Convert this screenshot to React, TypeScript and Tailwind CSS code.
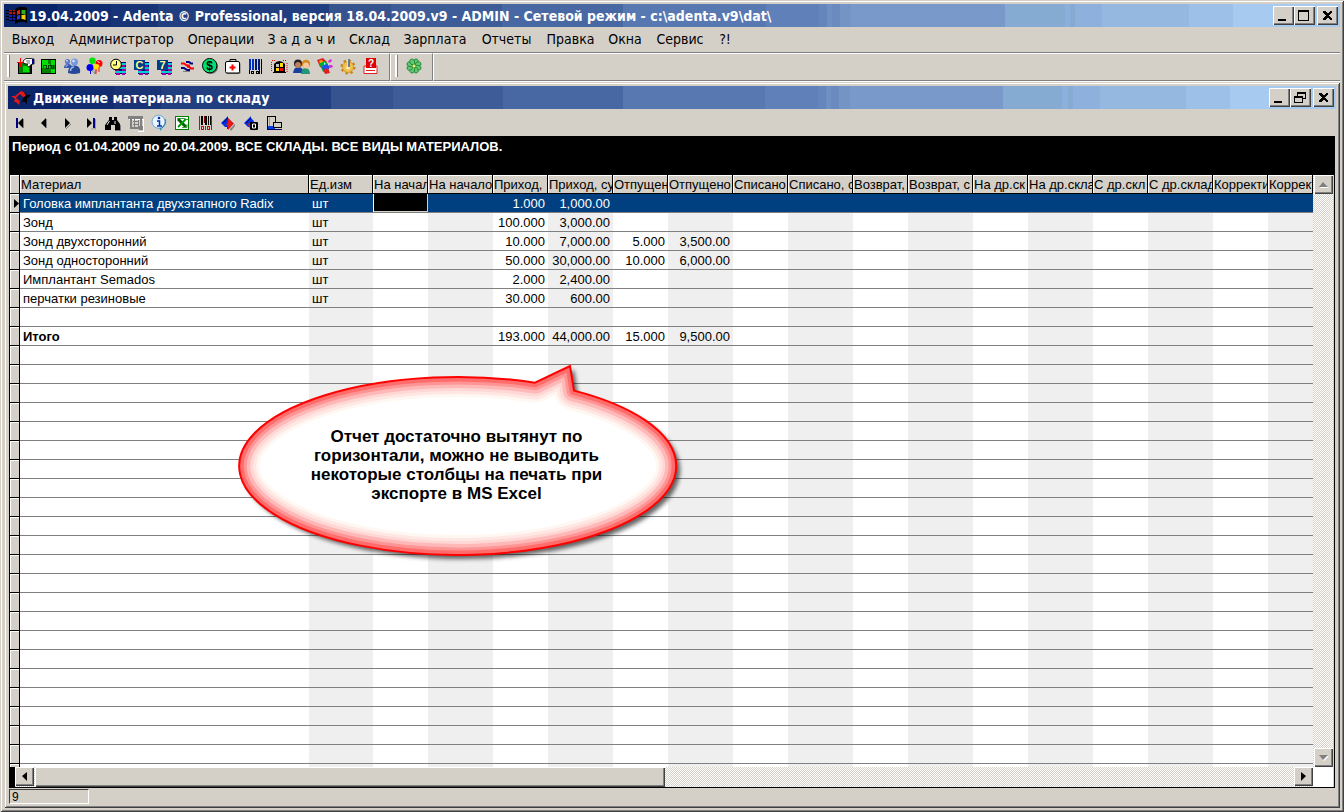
import type { ReactNode } from "react";
import clsx from "clsx";

/* ---------- shared bevels ---------- */

const RAISED =
  "bg-[#d4d0c8] shadow-[inset_1px_1px_0_#fff,inset_-1px_-1px_0_#404040,inset_-2px_-2px_0_#808080]";
const FRAME =
  "bg-[#d4d0c8] shadow-[inset_1px_1px_0_#d4d0c8,inset_-1px_-1px_0_#404040,inset_2px_2px_0_#fff,inset_-2px_-2px_0_#808080]";
const DITHER = "bg-[repeating-conic-gradient(#d4d0c8_0_25%,#fff_0_50%)] bg-[length:2px_2px]";
const CAPTION =
  "bg-[linear-gradient(90deg,#0a246a_0_4%,#112c70_0_8%,#183476_0_11.5%,#213f80_0_24.3%,#365390_0_29%,#3d5c98_0_37.3%,#4868a3_0_46.3%,#5878b1_0_57%,#5f80b9_0_61%,#6586bd_0_61.6%,#6f90c3_0_62%,#6a8bc0_0_62.6%,#7494c6_0_63.4%,#7899c9_0_74.9%,#86abd3_0_79.4%,#8bb0db_0_79.8%,#86abd3_0_80.2%,#8db1dc_0_82.2%,#95b8e1_0_88.7%,#9dc0e9_0_92%,#a6caf0_0)]";

/* ---------- icons ---------- */

function Icon({ children }: { children: ReactNode }) {
  return (
    <svg width="16" height="16" viewBox="0 0 16 16" className="block shrink-0 overflow-visible" aria-hidden="true">
      {children}
    </svg>
  );
}

function Stripes() {
  return (
    <g shapeRendering="crispEdges">
      <rect x="5" y="4" width="11" height="12" fill="#000080" />
      <path d="M9 5.500h7M9 9.500h7M5 13.500h11" stroke="#00d0d0" strokeWidth="2" />
      <path d="M12 7.500h3M12 11.500h4M5 11.500h4M6 15.500h4M12 15.500h3" stroke="#a000a0" strokeWidth="2" />
    </g>
  );
}

function LetterTile({ letter }: { letter: string }) {
  return (
    <Icon>
      <Stripes />
      <rect x="1" y="2" width="11" height="10" fill="#003c8c" shapeRendering="crispEdges" />
      <text x="6.5" y="11" textAnchor="middle" fontSize="11" fontWeight="bold" fontFamily="Liberation Sans, sans-serif" fill="#ffff80">
        {letter}
      </text>
    </Icon>
  );
}

const mainTools: { label: string; icon: ReactNode }[] = [
  {
    label: "Выход",
    icon: (
      <Icon>
        <g shapeRendering="crispEdges">
          <rect x="0" y="4" width="14" height="12" fill="#000" />
          <rect x="1" y="5" width="11" height="10" fill="#008000" />
          <rect x="5" y="8" width="6" height="6" fill="#00e000" />
          <path d="M2.500 0v9M-1 4.500h8" stroke="#f00" />
        </g>
        <path d="M5 3L8 0.500H13L16 1V6L13 6.500L11 9L9 8L9.500 6L6 5.500Z" fill="#fff" stroke="#000" strokeWidth="0.800" />
        <path d="M8 3h4M9 5h3" stroke="#000" strokeWidth="0.600" />
        <rect x="14" y="1" width="2" height="5" fill="#000080" />
      </Icon>
    ),
  },
  {
    label: "Пульс",
    icon: (
      <Icon>
        <g shapeRendering="crispEdges">
          <rect x="0" y="1" width="15" height="15" fill="#000" />
          <rect x="1" y="2" width="13" height="13" fill="#008000" />
          <path d="M1 2h6v4h2v4H1zM10 2h4v5h-4zM10 11h4v4h-4z" fill="#00e000" />
          <path d="M2.500 10V7.500h3V10h2V7.500h3V10h2V7" fill="none" stroke="#004000" />
        </g>
      </Icon>
    ),
  },
  {
    label: "Пациенты",
    icon: (
      <Icon>
        <circle cx="3.500" cy="3.500" r="2.600" fill="#5878c8" />
        <path d="M0 10Q0 6 4 6T8 10Z" fill="#3858b0" />
        <circle cx="10.500" cy="4" r="3.500" fill="#7898e0" />
        <path d="M4 15Q4 7.500 10.500 7.500T16 15Q10 17 4 15Z" fill="#284898" />
        <circle cx="9.500" cy="3" r="1.200" fill="#dce8ff" />
        <path d="M6.500 13Q6.500 9.500 10 9" fill="none" stroke="#a0bcf4" strokeWidth="1.500" />
        <circle cx="3" cy="2.800" r="0.900" fill="#dce8ff" />
        <path d="M2 9Q2 7 4 7" fill="none" stroke="#a0bcf4" />
      </Icon>
    ),
  },
  {
    label: "События",
    icon: (
      <Icon>
        <path d="M5 5L8 16M11 8L8 16M3 11L8 16" stroke="#808080" strokeWidth="0.700" />
        <circle cx="5.500" cy="2.800" r="3.200" fill="#00e000" />
        <circle cx="12" cy="5.500" r="3.500" fill="#f00" />
        <circle cx="3" cy="9.500" r="3.500" fill="#0000f0" />
        <circle cx="9.500" cy="9" r="2.900" fill="#ffe000" />
        <path d="M12 9v5M9 11v5" stroke="#f00" strokeWidth="0.900" />
        <path d="M3.500 13v3" stroke="#0000f0" />
        <path d="M10.500 3.500l2 1" stroke="#fff" />
      </Icon>
    ),
  },
  {
    label: "Время",
    icon: (
      <Icon>
        <Stripes />
        <circle cx="6" cy="6.500" r="5.300" fill="#ffff80" stroke="#000" />
        <path d="M6.500 3v4H3" fill="none" stroke="#000" />
      </Icon>
    ),
  },
  { label: "Календарь", icon: <LetterTile letter="C" /> },
  { label: "Неделя", icon: <LetterTile letter="7" /> },
  {
    label: "Движение",
    icon: (
      <Icon>
        <path d="M2 5.500h3l3 2h3" fill="none" stroke="#f00" strokeWidth="2" />
        <path d="M7 4h3l2 1.500h2" fill="none" stroke="#000080" strokeWidth="2" />
        <path d="M2 10h3l3 2h3" fill="none" stroke="#000080" strokeWidth="2" />
        <path d="M8 8.800h2l2 1.700h3" fill="none" stroke="#f00" strokeWidth="2" />
        <path d="M4 13.500h7" fill="none" stroke="#808080" />
      </Icon>
    ),
  },
  {
    label: "Касса",
    icon: (
      <Icon>
        <circle cx="8.800" cy="8.800" r="7.300" fill="#707070" />
        <circle cx="7.700" cy="7.700" r="7.200" fill="#00e070" stroke="#000" />
        <text x="7.700" y="12" textAnchor="middle" fontSize="12" fontWeight="bold" fontFamily="Liberation Sans, sans-serif">
          $
        </text>
      </Icon>
    ),
  },
  {
    label: "Лечение",
    icon: (
      <Icon>
        <path d="M5 4V1.500h6V4" fill="none" stroke="#000" />
        <rect x="1.500" y="4.500" width="14" height="11.500" rx="1.500" fill="#707070" />
        <rect x="0.500" y="3.500" width="14" height="11.500" rx="1.500" fill="#fff" stroke="#000" />
        <path d="M7.500 6.500v6M4.500 9.500h6" stroke="#f00" strokeWidth="2" />
      </Icon>
    ),
  },
  {
    label: "Штрих-код",
    icon: (
      <Icon>
        <g shapeRendering="crispEdges">
          <path d="M2 1v11M5 1v11" stroke="#0030c0" strokeWidth="2" />
          <path d="M8 1v11M11 1v11" stroke="#001878" strokeWidth="2" />
          <path d="M13.500 1v15M1.500 12v4" stroke="#000" />
          <path d="M3.500 13.500h2v2h-2zM8.500 13.500h2v2h-2zM11.500 12v4" fill="none" stroke="#000" />
        </g>
      </Icon>
    ),
  },
  {
    label: "Окно",
    icon: (
      <Icon>
        <path d="M3 15V6Q8 0 14 6V15Z" fill="#000" />
        <path d="M5 6h3v3H5z" fill="#c0c0c0" />
        <path d="M9 5h3v4H9zM5 10h3v3H5z" fill="#ffe000" />
        <path d="M9 10h3v3H9z" fill="#f00" />
        <path d="M1 2.500h4M12 2.500h4M0.500 4v10M16 5v10" stroke="#e00000" strokeDasharray="1 1" />
        <path d="M2 14.500h13" stroke="#000" />
      </Icon>
    ),
  },
  {
    label: "Сотрудники",
    icon: (
      <Icon>
        <path d="M-1 15Q0 8 5 9T9 15Z" fill="#1840a0" />
        <circle cx="4" cy="5.500" r="4" fill="#282020" />
        <circle cx="4" cy="7" r="2.900" fill="#c08060" />
        <path d="M7 16Q8 9 12 10T16 16Z" fill="#209878" />
        <circle cx="12" cy="6" r="4.200" fill="#d88818" />
        <circle cx="12" cy="7.500" r="3" fill="#f4c8a0" />
      </Icon>
    ),
  },
  {
    label: "Задачи",
    icon: (
      <Icon>
        <path d="M0 2l6-2 4 4-1 8-6-3z" fill="#e02020" />
        <path d="M2 5l6-2 3 3v5l-5 3z" fill="#00b030" />
        <path d="M5 8l5-2 3 3-3 5-4-2z" fill="#2050f0" />
        <path d="M2 3l3-1 1 2-3 1z" fill="#ffb000" />
        <path d="M6 12l5-2 2 5-5 1z" fill="#e02020" />
        <path d="M11 3l3-2 1 2-3 2zM12 7l3 0 1 2-3 1z" fill="#e020e0" />
        <path d="M7 4l2 2-2 1z" fill="#80ffff" />
      </Icon>
    ),
  },
  {
    label: "Настройка",
    icon: (
      <Icon>
        <circle cx="8" cy="9" r="6.300" fill="none" stroke="#c88818" strokeWidth="2.500" strokeDasharray="2.400 2.500" />
        <circle cx="8" cy="9" r="5.500" fill="#f0c050" stroke="#c08010" strokeWidth="0.600" />
        <circle cx="8" cy="9.500" r="2" fill="#fff0b0" />
        <path d="M7 1h3v8H7z" fill="#687898" />
        <path d="M7.500 1v8" stroke="#d8e0f0" />
      </Icon>
    ),
  },
  {
    label: "Справка",
    icon: (
      <Icon>
        <path d="M1 8h13v7.500H1z" fill="#fff" stroke="#e02020" />
        <path d="M3 12.500h9" stroke="#e02020" />
        <rect x="3" y="0" width="10" height="10" fill="#e00000" />
        <text x="8" y="9" textAnchor="middle" fontSize="10" fontWeight="bold" fontFamily="Liberation Sans, sans-serif" fill="#fff">
          ?
        </text>
      </Icon>
    ),
  },
];

const petals = [0, 45, 90, 135, 180, 225, 270, 315];

function CloverIcon() {
  return (
    <Icon>
      {petals.map((a) => (
        <ellipse key={a} cx="8" cy="3.500" rx="2.300" ry="3" fill="#60c870" stroke="#187828" strokeWidth="0.700" transform={`rotate(${a + 22} 8 8)`} />
      ))}
      <circle cx="8" cy="8" r="1.500" fill="#e8f070" />
    </Icon>
  );
}

function Arrows() {
  return (
    <>
      <path d="M10 14l5-5v2l-4 5z" fill="#808080" />
      <path d="M1 8l7-7v2l3 3-2 8H7v-2H5z" fill="#0030e0" />
      <path d="M3 8l5-5" stroke="#000060" />
    </>
  );
}

const childTools: { label: string; icon: ReactNode; disabled?: boolean }[] = [
  {
    label: "Первая запись",
    icon: (
      <Icon>
        <path d="M10.500 4v9" stroke="#808080" />
        <path d="M5 8l5-5v10z" fill="#000" />
        <path d="M4 3v10" stroke="#000080" strokeWidth="2" />
      </Icon>
    ),
  },
  { label: "Предыдущая запись", icon: <Icon><path d="M10.500 4v9" stroke="#808080" /><path d="M5 8l5-5v10z" /></Icon> },
  { label: "Следующая запись", icon: <Icon><path d="M7 14l5-5" stroke="#808080" /><path d="M11 8L6 3v10z" /></Icon> },
  {
    label: "Последняя запись",
    icon: (
      <Icon>
        <path d="M13.500 4v10H9" fill="none" stroke="#808080" strokeWidth="0.700" />
        <path d="M10 8L5 3v10z" fill="#000" />
        <path d="M12 3v10" stroke="#000080" strokeWidth="2" />
      </Icon>
    ),
  },
  {
    label: "Поиск",
    icon: (
      <Icon>
        <path d="M4 2h3v3h2V2h3v3l3 4v6h-5v-5H6v5H0v-5l4-5z" fill="#000" />
        <path d="M4.500 6L2 10M10 6v3" stroke="#fff" strokeWidth="0.900" />
        <path d="M15.500 10v5.500H10" fill="none" stroke="#808080" />
      </Icon>
    ),
  },
  {
    label: "Отбор",
    disabled: true,
    icon: (
      <Icon>
        <g shapeRendering="crispEdges">
          <path d="M1 4.500h15M15.500 4v12H10" fill="none" stroke="#fff" />
          <path d="M0 1h15v3H0zM2 4h2v10H2zM12 4h2v8h-2zM5 6h6v1H5zM5 9h6v1H5zM4 12h6v2H4zM11 11h4v4h-4z" fill="#808080" />
          <path d="M6.500 4v9M10.500 5v9" fill="none" stroke="#808080" />
        </g>
      </Icon>
    ),
  },
  {
    label: "Информация",
    icon: (
      <Icon>
        <circle cx="8.500" cy="7.500" r="7" fill="#b8c8d8" />
        <path d="M8 13l2 3 1-4z" fill="#3088a0" />
        <circle cx="7.500" cy="6.700" r="6.500" fill="#e8f4ff" stroke="#70a8d0" strokeWidth="1" />
        <path d="M14 4Q16 9 11 13" fill="none" stroke="#3080a0" />
        <circle cx="8" cy="3" r="1.300" fill="#0030b0" />
        <path d="M6 6h2.500v5M6 11h5" fill="none" stroke="#0030b0" strokeWidth="1.500" />
      </Icon>
    ),
  },
  {
    label: "Экспорт в Excel",
    icon: (
      <Icon>
        <g shapeRendering="crispEdges">
          <rect x="1.500" y="1.500" width="13" height="13" fill="#fff" stroke="#008000" />
          <path d="M3 3h7v1h3v1" fill="none" stroke="#40a040" />
        </g>
        <path d="M4 4l8 8" stroke="#006000" strokeWidth="3" />
        <path d="M12 4l-8 8" stroke="#00a000" strokeWidth="1.800" />
        <path d="M8 12.500h5V9" fill="none" stroke="#40a040" />
      </Icon>
    ),
  },
  {
    label: "Штрих-код",
    icon: (
      <Icon>
        <g shapeRendering="crispEdges">
          <path d="M2.500 1v14M14.500 1v14" stroke="#e00000" />
          <path d="M5 1v9M9 1v9" stroke="#000" strokeWidth="2" />
          <path d="M11.500 1v9M13.500 1v9" stroke="#000" />
          <path d="M7.500 1v7" stroke="#800000" />
          <path d="M4.500 11.500h2v3h-2zM8.500 11v4M10.500 11.500h2v3h-2z" fill="none" stroke="#e00000" />
        </g>
      </Icon>
    ),
  },
  {
    label: "Обмен",
    icon: (
      <Icon>
        <Arrows />
        <path d="M8 3l6 5.500L8 15V11L6 9l2-1z" fill="#e01818" />
      </Icon>
    ),
  },
  {
    label: "Сброс",
    icon: (
      <Icon>
        <Arrows />
        <path d="M5 9l2 5 2-7z" fill="#e01818" />
        <rect x="7" y="7" width="8" height="8" rx="1" fill="#000" />
        <path d="M9.500 9h3v4h-3z" fill="none" stroke="#fff" />
      </Icon>
    ),
  },
  {
    label: "Вид",
    icon: (
      <Icon>
        <g shapeRendering="crispEdges">
          <path d="M1.500 14V1.500h8V7" fill="none" stroke="#000" />
          <path d="M3 2h1v11H3z" fill="#00d8e8" />
          <rect x="2" y="11" width="7" height="3" fill="#0040e0" />
          <rect x="7.500" y="7.500" width="8" height="5" fill="#d4d0c8" stroke="#000" />
          <path d="M1 14.500h15" stroke="#000060" />
        </g>
      </Icon>
    ),
  },
];

function WindowsLogo() {
  return (
    <svg width="21" height="17" viewBox="0 0 21 17" aria-hidden="true">
      <path d="M0 3h4v1H0zM0 6h4v1H0zM0 9h4v1H0zM0 12h4v1H0z" fill="#000" />
      <path d="M3 3h6v5H3z" fill="#c01010" />
      <path d="M3 8h6v6H3z" fill="#1020c0" />
      <path d="M3 4.500h6M3 7.500h6M3 10.500h6M3 13.500h6M6.500 3v11" stroke="#000" strokeWidth="0.800" />
      <path d="M9 2Q15 -2 21 1V16Q15 13 9 17Z" fill="#000" />
      <path d="M11 4Q12 3 14 3V7Q12 7 11 8Z" fill="#e02010" />
      <path d="M15.500 3h4v5q-2-1-4-1z" fill="#30b020" />
      <path d="M11 9Q12 8 14 8V12Q12 12 11 13Z" fill="#2040e0" />
      <path d="M15.500 8h4v5q-2-1-4-1z" fill="#f0d010" />
    </svg>
  );
}

function ArrowsLogo() {
  return (
    <svg width="20" height="16" viewBox="0 0 20 16" aria-hidden="true">
      <path d="M12 1l4 4h4l-4 4v5l-3-3-3 2 2-4 2-3-3-3z" fill="#000" />
      <path d="M0 6h4l6-5 3 1 2 4-3 1-3-3-4 4 4 3-1 4-3-3H3l1-3z" fill="#e01818" />
      <path d="M8 5l3 3-3 2-2-2z" fill="#0a246a" />
    </svg>
  );
}

/* ---------- window chrome ---------- */

const captionGlyphs = {
  minimize: <path d="M5 13h8v2H5z" />,
  maximize: <path d="M4 4h11v11H4zM5 6v8h9V6z" fillRule="evenodd" />,
  restore: <path d="M7 4h9v7h-3v-1h2V6H8v2H7zM4 8h9v7H4zM5 10v4h7v-4z" fillRule="evenodd" />,
  close: <path d="M6 5h2l2.500 2.500L13 5h2v1l-3 3.500L15 13v1h-2l-2.500-2.500L8 14H6v-1l3-3.500L6 6z" />,
};

function CaptionButton({ kind, label }: { kind: keyof typeof captionGlyphs; label: string }) {
  return (
    <button type="button" aria-label={label} className={clsx("h-[19px] w-[21px] shrink-0", RAISED)}>
      <svg width="21" height="19" viewBox="0 0 21 19" shapeRendering="crispEdges" className="block">
        {captionGlyphs[kind]}
      </svg>
    </button>
  );
}

function Caption({ logo, title, restored }: { logo: ReactNode; title: string; restored?: boolean }) {
  return (
    <header className={clsx("flex h-[23px] shrink-0 items-center pr-0.5", CAPTION)}>
      <div className="flex w-[25px] shrink-0 justify-center">{logo}</div>
      <h1 className="min-w-0 flex-1 truncate pt-0.5 font-['DejaVu_Sans_Condensed','DejaVu_Sans',sans-serif] text-[14px] font-bold text-white">
        {title}
      </h1>
      <div className="flex">
        <CaptionButton kind="minimize" label="Свернуть" />
        <CaptionButton kind={restored ? "restore" : "maximize"} label="Развернуть" />
      </div>
      <div className="ml-0.5 flex">
        <CaptionButton kind="close" label="Закрыть" />
      </div>
    </header>
  );
}

const menuItems = [
  { label: "Выход", width: "w-[58px]" },
  { label: "Администратор", width: "w-[119px]" },
  { label: "Операции", width: "w-[80px]" },
  { label: "З а д а ч и", width: "w-[81px]" },
  { label: "Склад", width: "w-[55px]" },
  { label: "Зарплата", width: "w-[76px]" },
  { label: "Отчеты", width: "w-[67px]" },
  { label: "Правка", width: "w-[61px]" },
  { label: "Окна", width: "w-[48px]" },
  { label: "Сервис", width: "w-[62px]" },
  { label: "?!", width: "w-[28px]" },
];

function MenuBar() {
  return (
    <nav className="flex h-[25px] shrink-0 items-center font-['DejaVu_Sans_Condensed','DejaVu_Sans',sans-serif] text-[14px]">
      {menuItems.map((m) => (
        <button key={m.label} type="button" className={clsx("text-center whitespace-nowrap", m.width)}>
          {m.label}
        </button>
      ))}
    </nav>
  );
}

function ToolButton({ label, icon, disabled }: { label: string; icon: ReactNode; disabled?: boolean }) {
  return (
    <button type="button" aria-label={label} disabled={disabled} className="flex size-[23px] items-center justify-center">
      {icon}
    </button>
  );
}

function Grip() {
  return <div className="h-[22px] w-[3px] border-r border-[#808080] bg-white" />;
}

function MainToolbar() {
  return (
    <div className="flex h-[30px] shrink-0 border-y border-t-[#808080] border-b-white">
      <div className="flex items-center border-t border-r border-b border-t-white border-r-[#808080] border-b-[#808080] pr-[7px] pb-0.5 pl-[3px]">
        <Grip />
        <div className="ml-1 flex">
          {mainTools.map((t) => (
            <ToolButton key={t.label} {...t} />
          ))}
        </div>
      </div>
      <div className="flex items-center border border-x-white border-t-white border-r-[#808080] border-b-[#808080] pr-[7px] pb-0.5 pl-1">
        <Grip />
        <div className="ml-1">
          <ToolButton label="Клевер" icon={<CloverIcon />} />
        </div>
      </div>
      <div className="flex-1 border-t border-b border-l border-t-white border-b-[#808080] border-l-white" />
    </div>
  );
}

/* ---------- grid ---------- */

const columns = [
  { title: "Материал", width: "w-[289px]" },
  { title: "Ед.изм", width: "w-[64px]" },
  { title: "На начал", width: "w-[55px]" },
  { title: "На начало", width: "w-[65px]" },
  { title: "Приход,", width: "w-[55px]" },
  { title: "Приход, су", width: "w-[65px]" },
  { title: "Отпущен", width: "w-[55px]" },
  { title: "Отпущено", width: "w-[65px]" },
  { title: "Списано,", width: "w-[55px]" },
  { title: "Списано, с", width: "w-[65px]" },
  { title: "Возврат,", width: "w-[55px]" },
  { title: "Возврат, с", width: "w-[65px]" },
  { title: "На др.ск", width: "w-[55px]" },
  { title: "На др.скла", width: "w-[65px]" },
  { title: "С др.скл", width: "w-[55px]" },
  { title: "С др.склад", width: "w-[65px]" },
  { title: "Корректи", width: "w-[55px]" },
  { title: "Коррект", width: "w-auto" },
];

const records: string[][] = [
  ["Головка имплантанта двухэтапного Radix", "шт", "", "", "1.000", "1,000.00"],
  ["Зонд", "шт", "", "", "100.000", "3,000.00"],
  ["Зонд двухсторонний", "шт", "", "", "10.000", "7,000.00", "5.000", "3,500.00"],
  ["Зонд односторонний", "шт", "", "", "50.000", "30,000.00", "10.000", "6,000.00"],
  ["Имплантант Semados", "шт", "", "", "2.000", "2,400.00"],
  ["перчатки резиновые", "шт", "", "", "30.000", "600.00"],
  [],
  ["Итого", "", "", "", "193.000", "44,000.00", "15.000", "9,500.00"],
];

// blank rows fill the rest of the viewport
const rows = [...records, ...Array.from({ length: 23 }, () => [] as string[])];

function GridCell({ text, row, col }: { text: string; row: number; col: number }) {
  const selected = row === 0;
  return (
    <td
      className={clsx(
        "h-[19px] overflow-hidden border-b border-[#808080] px-[3px] pt-0.5 pb-0 leading-[16px] whitespace-nowrap",
        selected && col === 2 && "bg-black shadow-[inset_1px_0_0_#fff,inset_-1px_-1px_0_#d4d0c8]",
        selected && col !== 2 && "bg-[#004080] text-white",
        !selected && (col % 2 ? "bg-[#efefef]" : "bg-white"),
        col > 1 && "text-right",
        text === "Итого" && "font-bold",
      )}
    >
      {text}
    </td>
  );
}

function StockTable() {
  return (
    <table className="w-full table-fixed border-separate border-spacing-0 text-[13px]">
      <thead>
        <tr>
          <th className="h-[19px] w-[10px] border-r border-b border-black bg-[#d4d0c8] p-0 shadow-[inset_1px_1px_0_#fff]" />
          {columns.map((c) => (
            <th
              key={c.title}
              scope="col"
              className={clsx(
                "h-[19px] overflow-hidden border-r border-b border-black bg-[#d4d0c8] pt-0.5 pr-0 pb-0 pl-px text-left leading-[16px] font-normal whitespace-nowrap shadow-[inset_1px_1px_0_#fff]",
                c.width,
              )}
            >
              {c.title}
            </th>
          ))}
        </tr>
      </thead>
      <tbody>
        {rows.map((row, r) => (
          <tr key={r}>
            <td className="h-[19px] border-r border-b border-black bg-[#d4d0c8] p-0 shadow-[inset_1px_1px_0_#fff]">
              {r === 0 && (
                <svg width="9" height="11" viewBox="0 0 9 11" className="block" aria-hidden="true">
                  <path d="M4 1l5 4.500L4 10z" />
                </svg>
              )}
            </td>
            {columns.map((c, i) => (
              <GridCell key={c.title} text={row[i] ?? ""} row={r} col={i} />
            ))}
          </tr>
        ))}
      </tbody>
    </table>
  );
}

const BALLOON = "M305 27.700L340 11L344 35.600A218.500 89 0 1 1 305 27.700Z";

const glow = [
  { width: 40, color: "#fff8f2" },
  { width: 34, color: "#ffe8e4" },
  { width: 28, color: "#ffd8d6" },
  { width: 22, color: "#ffb8b8" },
  { width: 15, color: "#ff9494" },
  { width: 9, color: "#ff6c6c" },
];

function Balloon() {
  return (
    <aside className="absolute top-[180px] left-[220px] flex h-[210px] w-[460px] justify-center pr-[7px]">
      <svg width="460" height="210" viewBox="0 0 460 210" className="absolute inset-0" aria-hidden="true">
        <defs>
          <clipPath id="balloon-clip">
            <path d={BALLOON} />
          </clipPath>
          <filter id="balloon-shadow" x="-5%" y="-5%" width="115%" height="120%">
            <feDropShadow dx="4" dy="4" stdDeviation="2" floodColor="#000" floodOpacity="0.6" />
          </filter>
        </defs>
        <path d={BALLOON} fill="#fff" filter="url(#balloon-shadow)" />
        <g clipPath="url(#balloon-clip)" fill="none" strokeLinejoin="round">
          {glow.map((g) => (
            <path key={g.width} d={BALLOON} stroke={g.color} strokeWidth={g.width} />
          ))}
        </g>
        <path d={BALLOON} fill="none" stroke="#f00" strokeWidth="2" />
      </svg>
      <p className="relative pt-[72px] text-center text-[17px] leading-[19px] font-bold">
        Отчет достаточно вытянут по
        <br />
        горизонтали, можно не выводить
        <br />
        некоторые столбцы на печать при
        <br />
        экспорте в MS Excel
      </p>
    </aside>
  );
}

function ScrollButton({ label, points, muted }: { label: string; points: string; muted?: boolean }) {
  return (
    <button type="button" aria-label={label} className={clsx("flex size-[19px] shrink-0 items-center justify-center", RAISED)}>
      <svg width="11" height="11" viewBox="0 0 11 11" aria-hidden="true">
        {muted && <polygon points={points} fill="#fff" transform="translate(1 1)" />}
        <polygon points={points} fill={muted ? "#808080" : "#000"} />
      </svg>
    </button>
  );
}

function StockGrid() {
  return (
    <div className="relative flex min-h-0 flex-1 flex-col pr-px">
      <div className="flex min-h-0 flex-1">
        <div className="min-w-0 flex-1 overflow-hidden bg-white">
          <StockTable />
        </div>
        <div className={clsx("flex w-5 shrink-0 flex-col items-end justify-between", DITHER)}>
          <ScrollButton label="Вверх" points="1,8 5,3 10,8" muted />
          <ScrollButton label="Вниз" points="1,3 10,3 5,8" muted />
        </div>
      </div>
      <div className="flex h-5 shrink-0">
        <div className="w-[5px] bg-black" />
        <div className={clsx("flex min-w-0 flex-1 items-stretch", DITHER)}>
          <ScrollButton label="Влево" points="8,1 3,5 8,10" />
          <div className={clsx("ml-px w-[48.5%]", RAISED)} />
          <div className="flex-1" />
          <ScrollButton label="Вправо" points="3,1 8,5 3,10" />
        </div>
        <div className="w-5 bg-white" />
      </div>
      <Balloon />
    </div>
  );
}

function ReportWindow() {
  return (
    <section className={clsx("flex min-h-0 flex-1 flex-col p-1", FRAME)}>
      <Caption logo={<ArrowsLogo />} title="Движение материала по складу" restored />
      <div className="flex h-[27px] shrink-0 items-center pl-px">
        {childTools.map((t) => (
          <ToolButton key={t.label} {...t} />
        ))}
      </div>
      <div className="mx-px flex min-h-0 flex-1 flex-col border-r border-b border-l border-black bg-[#d4d0c8]">
        <div className="h-[39px] shrink-0 bg-black pt-0.5 pl-0.5 text-[13px] leading-[17px] font-bold text-white">
          Период с 01.04.2009 по 20.04.2009. ВСЕ СКЛАДЫ. ВСЕ ВИДЫ МАТЕРИАЛОВ.
        </div>
        <StockGrid />
      </div>
      <footer className="flex h-4 shrink-0 pt-px pl-px">
        <div className="h-[15px] w-[80px] border border-t-[#404040] border-r-white border-b-white border-l-[#404040] pl-0.5 text-[12px] leading-[14px]">
          9
        </div>
      </footer>
    </section>
  );
}

export default function App() {
  return (
    <main
      className={clsx(
        "flex h-screen flex-col overflow-hidden p-1 font-['Liberation_Sans',Arial,sans-serif] text-black",
        FRAME,
      )}
    >
      <Caption
        logo={<WindowsLogo />}
        title="19.04.2009 - Adenta © Professional, версия 18.04.2009.v9 - ADMIN - Сетевой режим - c:\adenta.v9\dat\"
      />
      <MenuBar />
      <MainToolbar />
      <ReportWindow />
    </main>
  );
}
